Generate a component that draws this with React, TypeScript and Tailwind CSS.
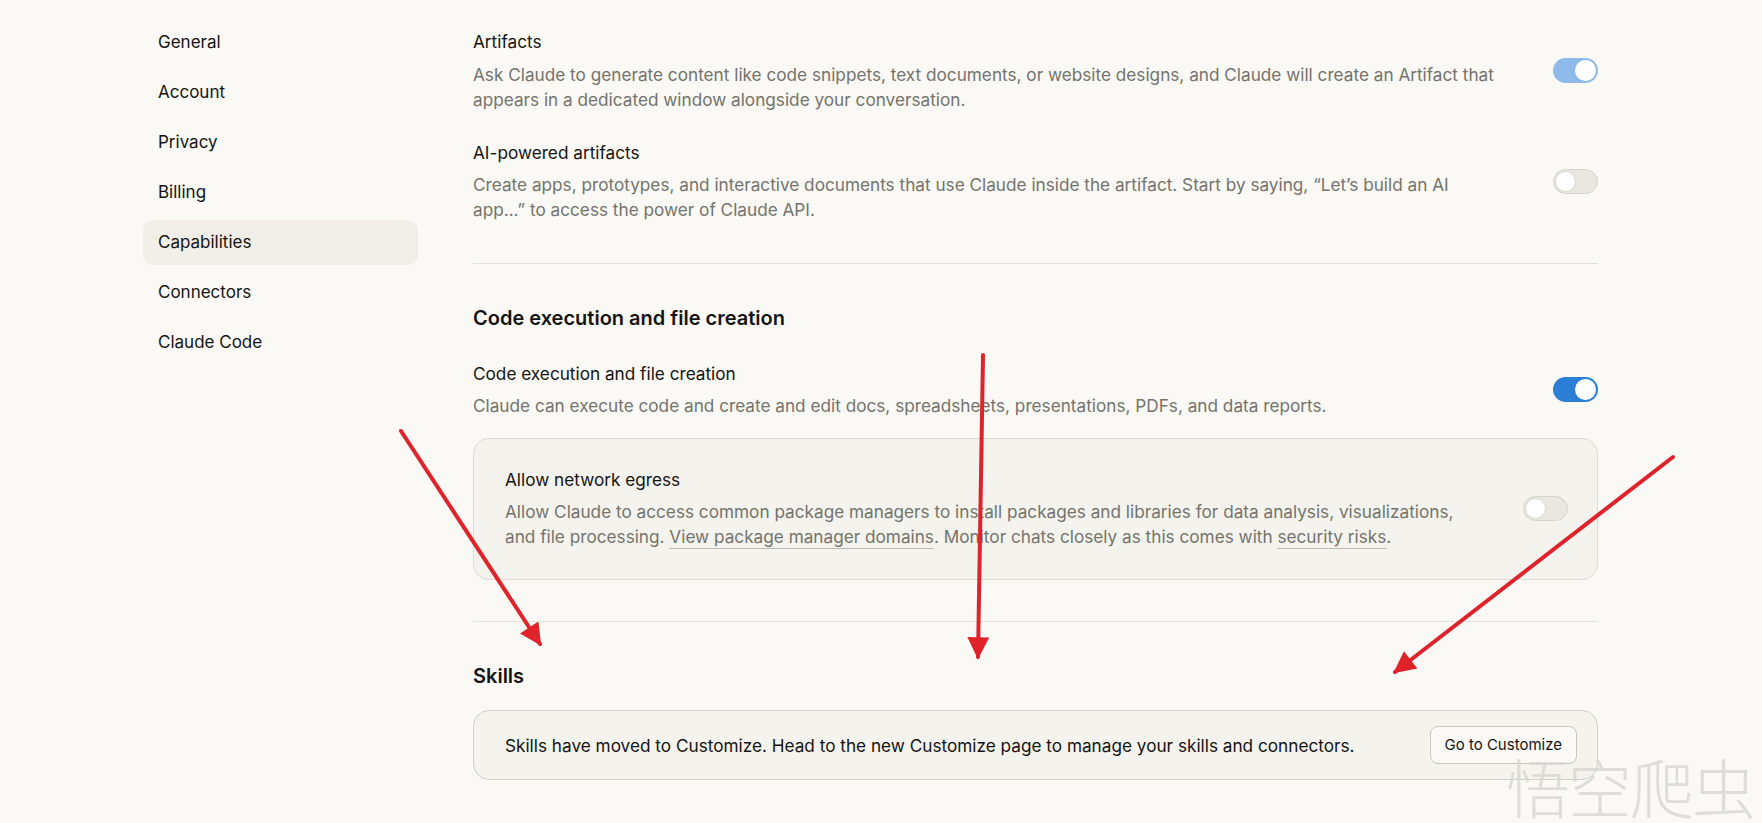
import React from "react";

type ToggleKind = "onLight" | "on" | "off";

function Toggle({ kind }: { kind: ToggleKind }) {
  if (kind === "off") {
    return (
      <div className="w-[45px] h-[25px] shrink-0 rounded-full bg-[#e9e7df] border border-[#d6d4cb] flex items-center justify-start px-[1px]">
        <div className="w-[21px] h-[21px] rounded-full bg-white border border-[#d9d7ce]" />
      </div>
    );
  }
  return (
    <div
      className={
        kind === "on"
          ? "w-[45px] h-[25px] shrink-0 rounded-full bg-[#2b80d6] flex items-center justify-end px-[2px]"
          : "w-[45px] h-[25px] shrink-0 rounded-full bg-[#8dbae8] flex items-center justify-end px-[2px]"
      }
    >
      <div className="w-[21px] h-[21px] rounded-full bg-white" />
    </div>
  );
}

const navItems = ["General", "Account", "Privacy", "Billing", "Capabilities", "Connectors", "Claude Code"];

export default function App() {
  return (
    <div className="relative min-h-screen h-[823px] overflow-hidden bg-[#faf9f5] font-['Inter',sans-serif] text-[#141413]">
      <div className="flex pl-[143px] pr-[164px]">
        <nav className="w-[275px] shrink-0 pt-[20px] flex flex-col gap-[5px]">
          {navItems.map((item) => (
            <div
              key={item}
              className={
                item === "Capabilities"
                  ? "h-[45px] px-[15px] flex items-center rounded-[10px] bg-[#f0eee6] text-[17px] text-[#141413]"
                  : "h-[45px] px-[15px] flex items-center rounded-[10px] text-[17px] text-[#141413]"
              }
            >
              {item}
            </div>
          ))}
        </nav>

        <main className="ml-[55px] flex-1 min-w-0 pt-[29px]">
          <div className="flex items-center gap-[40px]">
            <div className="flex-1 min-w-0">
              <div className="text-[17.2px] leading-[25px] text-[#141413]">Artifacts</div>
              <p className="mt-[8px] text-[17.2px] leading-[25px] text-[#74736c]">
                Ask Claude to generate content like code snippets, text documents, or website designs, and Claude will create an Artifact that appears in a dedicated window alongside your conversation.
              </p>
            </div>
            <Toggle kind="onLight" />
          </div>

          <div className="mt-[28px] flex items-center gap-[40px]">
            <div className="flex-1 min-w-0">
              <div className="text-[17.2px] leading-[25px] text-[#141413]">AI-powered artifacts</div>
              <p className="mt-[7px] text-[17.2px] leading-[25px] text-[#74736c]">
                Create apps, prototypes, and interactive documents that use Claude inside the artifact. Start by saying, “Let’s build an AI
                <br />
                app...” to access the power of Claude API.
              </p>
            </div>
            <Toggle kind="off" />
          </div>

          <div className="mt-[41px] h-px bg-[#e3e1d9]" />

          <h2 className="mt-[40px] text-[20px] leading-[28px] font-semibold text-[#141413]">
            Code execution and file creation
          </h2>

          <div className="mt-[29px] flex items-center gap-[40px]">
            <div className="flex-1 min-w-0">
              <div className="text-[17.2px] leading-[25px] text-[#141413]">Code execution and file creation</div>
              <p className="mt-[7px] text-[17.2px] leading-[25px] text-[#74736c]">
                Claude can execute code and create and edit docs, spreadsheets, presentations, PDFs, and data reports.
              </p>
            </div>
            <Toggle kind="on" />
          </div>

          <div className="mt-[20px] rounded-[16px] border border-[#dedbd2] bg-[#f4f3ed] pl-[31px] pr-[29px] pt-[28px] pb-[30px] flex items-center gap-[48px]">
            <div className="flex-1 min-w-0">
              <div className="text-[17.2px] leading-[25px] text-[#141413]">Allow network egress</div>
              <p className="mt-[7px] text-[17.2px] leading-[25px] text-[#74736c]">
                Allow Claude to access common package managers to install packages and libraries for data analysis, visualizations, and file processing.{" "}
                <span className="underline decoration-[#bdbab1] decoration-1 underline-offset-[5px]">View package manager domains</span>. Monitor chats closely as this comes with{" "}
                <span className="underline decoration-[#bdbab1] decoration-1 underline-offset-[5px]">security risks</span>.
              </p>
            </div>
            <Toggle kind="off" />
          </div>

          <div className="mt-[41px] h-px bg-[#e3e1d9]" />

          <h2 className="mt-[40px] text-[20px] leading-[28px] font-semibold text-[#141413]">Skills</h2>

          <div className="mt-[20px] rounded-[16px] border border-[#d3d0c7] bg-[#f4f3ed] pl-[31px] pr-[20px] py-[15px] flex items-center gap-[20px]">
            <p className="flex-1 min-w-0 text-[17.2px] leading-[25px] text-[#141413]">
              Skills have moved to Customize. Head to the new Customize page to manage your skills and connectors.
            </p>
            <button className="h-[38px] px-[14px] rounded-[8px] border border-[#c9c6bd] bg-[#faf9f5] text-[15px] text-[#141413]">
              Go to Customize
            </button>
          </div>
        </main>
      </div>

      {/* annotation arrows */}
      <svg className="absolute inset-0 pointer-events-none" width="1762" height="823" viewBox="0 0 1762 823">
        <defs>
          <marker id="ah" viewBox="0 0 10 10" refX="9" refY="5" markerWidth="6" markerHeight="5.5" orient="auto" markerUnits="strokeWidth">
            <path d="M0 0 L10 5 L0 10 Z" fill="#e0222b" />
          </marker>
        </defs>
        <line x1="401" y1="431" x2="540" y2="644" stroke="#e0222b" strokeWidth="4" strokeLinecap="round" markerEnd="url(#ah)" />
        <line x1="983" y1="355" x2="978" y2="657" stroke="#e0222b" strokeWidth="4" strokeLinecap="round" markerEnd="url(#ah)" />
        <line x1="1673" y1="457" x2="1395" y2="672" stroke="#e0222b" strokeWidth="4" strokeLinecap="round" markerEnd="url(#ah)" />
      </svg>

      {/* watermark */}
      <div className="absolute right-[8px] bottom-[6px] pointer-events-none text-[64px] leading-none font-['Noto_Sans_CJK_SC',sans-serif] font-light text-[#d8d7d3] opacity-80 tracking-[-2px]">
        悟空爬虫
      </div>
    </div>
  );
}
